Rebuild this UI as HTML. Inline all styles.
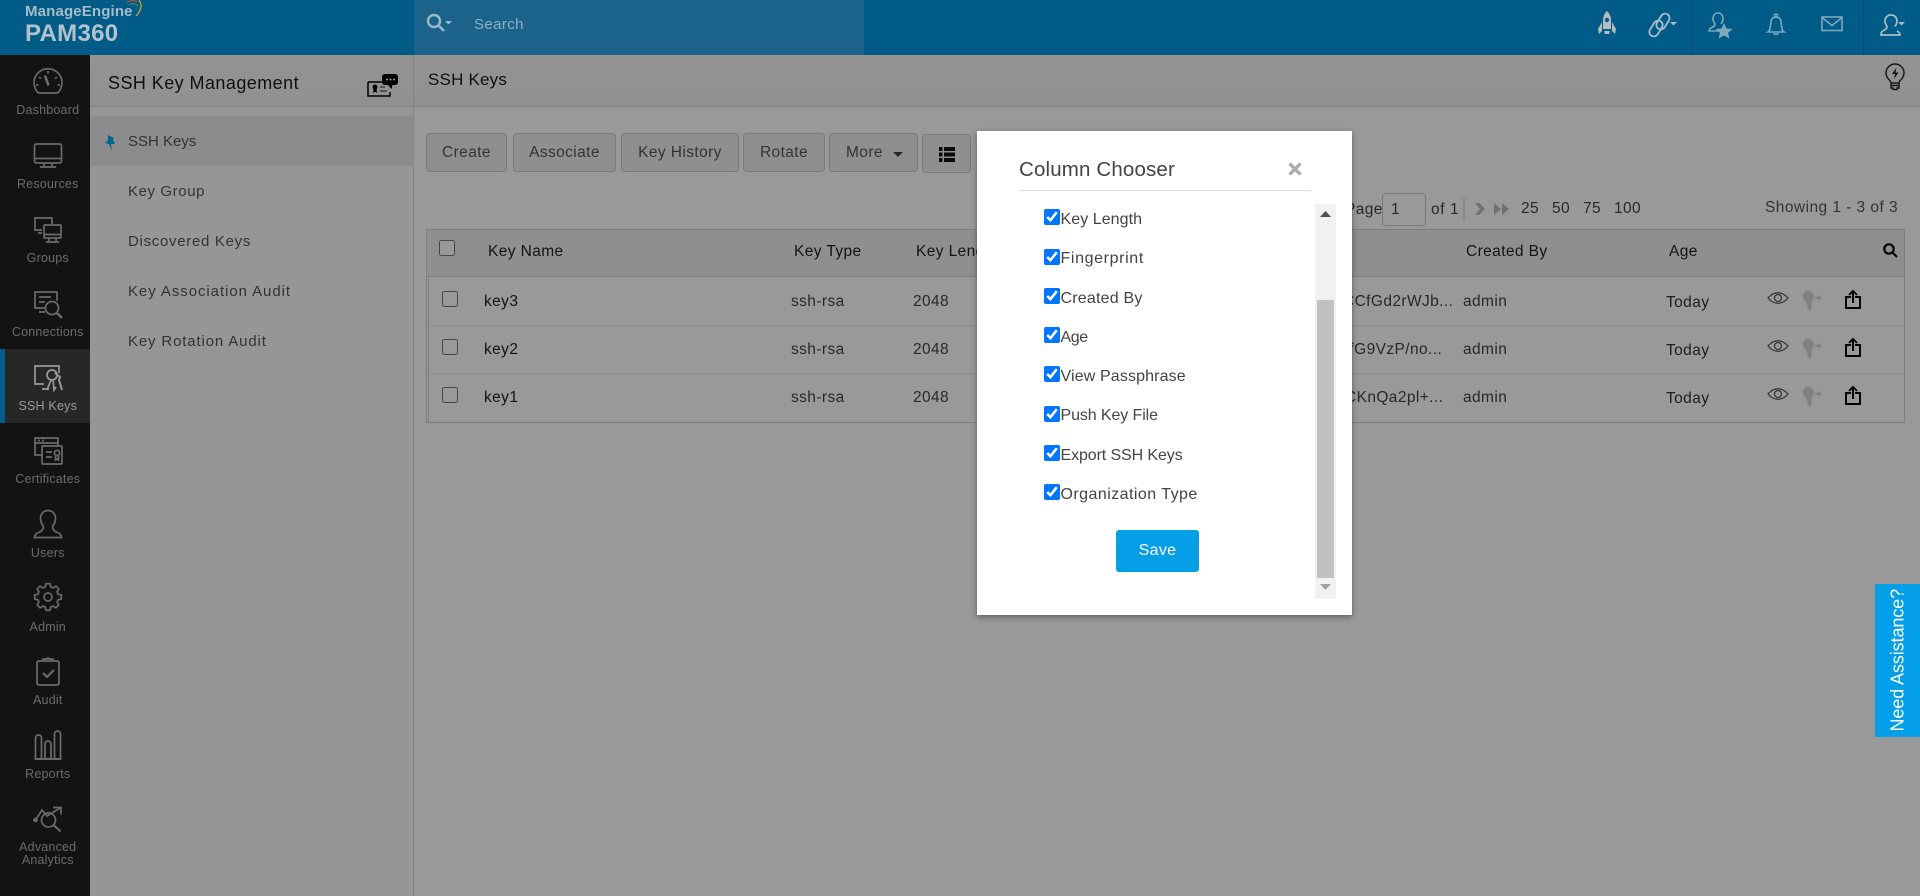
<!DOCTYPE html>
<html lang="en"><head><meta charset="utf-8"><title>SSH Keys - PAM360</title>
<style>
html,body{margin:0;padding:0;width:1920px;height:896px;overflow:hidden;background:#fff;font-family:"Liberation Sans",sans-serif;}
*{box-sizing:border-box}
.b{position:absolute}
.t{position:absolute;white-space:nowrap;line-height:20px;height:20px;font-size:15.5px;letter-spacing:.4px;color:#444}
.n{position:absolute;left:0;width:95.5px;text-align:center;font-size:12.5px;letter-spacing:.2px;line-height:14px;color:#b2b2b2}
svg{position:absolute;overflow:visible}
.i{fill:none;stroke:#b2b2b2;stroke-width:1.7;left:33px;width:30px;height:30px}
button{position:absolute;top:133px;height:39px;background:#eee;border:1px solid #ccc;border-radius:4px;color:#555;font:15.5px "Liberation Sans",sans-serif;letter-spacing:.4px;padding:0;margin:0}
input.c{position:absolute;margin:0;width:16px;height:16px}
.hl{position:absolute;left:428px;width:1476px;height:1px;background:#e4e4e4}
.l{position:absolute;left:128px;color:#555;font-size:15px;white-space:nowrap;line-height:20px}
.m{position:absolute;left:1060.5px;font-size:16px;color:#444;white-space:nowrap;line-height:20px;z-index:12}
</style></head><body>

<!-- top bar -->
<div class="b" style="left:0;top:0;width:1920px;height:55px;background:#0398e2"></div>
<div class="b" style="left:414px;top:0;width:450px;height:55px;background:#2ea5e8"></div>
<div class="b" style="left:1692px;top:0;width:1px;height:55px;background:#0385c8"></div>
<div class="b" style="left:1863px;top:0;width:1px;height:55px;background:#0385c8"></div>

<!-- sidebar -->
<div class="b" style="left:0;top:55px;width:90px;height:841px;background:#202020"></div>
<div class="b" style="left:0;top:349px;width:90px;height:74px;background:#414141"></div>
<div class="b" style="left:0;top:349px;width:5px;height:74px;background:#039eec"></div>

<svg class="i" style="top:67px" viewBox="0 0 30 30"><path d="M5.5 26A14 14 0 1 1 24.5 26Z"/><path d="M12 8.5l3.500 10" stroke-width="2.600"/><path d="M15 4v2.500M6 10l2 1.500M24 10l-2 1.500M3 18h2.500M27 18h-2.500"/></svg>
<div class="n" style="top:103px">Dashboard</div>
<svg class="i" style="top:140px" viewBox="0 0 30 30"><rect x="1.500" y="4" width="27" height="19" rx="2"/><path d="M1.500 18.500h27M11 23v3.500M19 23v3.500M7 27h16"/></svg>
<div class="n" style="top:177px">Resources</div>
<svg class="i" style="top:215px" viewBox="0 0 30 30"><path d="M9 15H2V3h17v6"/><path d="M5 18h4"/><rect x="11" y="10" width="17" height="13" rx="1"/><path d="M11 19.500h17M16 23v3M23 23v3M13 27h13"/></svg>
<div class="n" style="top:251px">Groups</div>
<svg class="i" style="top:289px" viewBox="0 0 30 30"><path d="M12 19H2V3h22v9"/><path d="M6 23h6M6 8h12M6 13h6"/><circle cx="19" cy="19" r="6.500"/><path d="M23.500 23.500L29 29" stroke-width="2.400"/></svg>
<div class="n" style="top:325px">Connections</div>
<svg class="i" style="top:363px;stroke:#fff" viewBox="0 0 30 30"><path d="M26 10V3H2v18h9M9 26h7"/><circle cx="19" cy="12" r="5"/><path d="M18 17l-4 10M20 17l1 10 2-3"/><path d="M22 10l5 4-1 3 3 10" stroke-width="2"/></svg>
<div class="n" style="top:399px;color:#fff">SSH Keys</div>
<svg class="i" style="top:435px" viewBox="0 0 30 30"><path d="M10 20H2V3h23v8"/><path d="M2 8h23M5 5.500h2M9 5.500h2"/><rect x="9" y="11" width="20" height="18" rx="1"/><path d="M13 17h6M13 22h6"/><circle cx="24" cy="18" r="2.600"/><path d="M22.500 21v4l1.500-1 1.500 1v-4"/></svg>
<div class="n" style="top:472px">Certificates</div>
<svg class="i" style="top:509px" viewBox="0 0 30 30"><path d="M15 1.500c-5 0-7.500 4-7.500 8 0 3 1.500 6 3 8 0 2-.5 3.500-3 5-3 1.500-6 2.500-6 6h27c0-3.500-3-4.500-6-6-2.500-1.500-3-3-3-5 1.500-2 3-5 3-8 0-4-2.500-8-7.500-8z"/></svg>
<div class="n" style="top:546px">Users</div>
<svg class="i" style="top:582px" viewBox="0 0 30 30"><path stroke-linejoin="round" d="M12.280 4.860L12.890 1.670H17.110L17.720 4.860L20.250 5.910L22.930 4.080L25.920 7.070L24.090 9.750L25.140 12.280L28.330 12.890V17.110L25.140 17.720L24.090 20.250L25.920 22.930L22.930 25.920L20.250 24.090L17.720 25.140L17.110 28.330H12.890L12.280 25.140L9.750 24.090L7.070 25.920L4.080 22.930L5.910 20.250L4.860 17.720L1.670 17.110V12.890L4.860 12.280L5.910 9.750L4.080 7.070L7.070 4.080L9.750 5.910Z"/><circle cx="15" cy="15" r="4"/></svg>
<div class="n" style="top:620px">Admin</div>
<svg class="i" style="top:657px" viewBox="0 0 30 30"><rect x="4" y="4" width="22" height="24" rx="2"/><path d="M10 4V2h4l1-1 1 1h4v2"/><path d="M10 16l4 4 7-7" stroke-width="2.200"/></svg>
<div class="n" style="top:693px">Audit</div>
<svg class="i" style="top:730px" viewBox="0 0 30 30"><path d="M2.500 29V8a3 3 0 0 1 6 0v21zM12 29V14a2.500 2.500 0 0 1 6 0v15zM21.500 29V4a3 3 0 0 1 6 0v25z"/><path d="M1.500 29h27"/></svg>
<div class="n" style="top:767px">Reports</div>
<svg class="i" style="top:805px" viewBox="0 0 30 30"><path d="M2.500 15L9 5l5 6L28 2.500"/><path d="M20 2.500h8v7"/><circle cx="15.500" cy="15" r="7"/><path d="M20.500 20l7 6.500" stroke-width="2.200"/><circle cx="2.500" cy="15" r="1.500" fill="#b2b2b2"/></svg>
<div class="n" style="top:841px;line-height:12.500px">Advanced<br>Analytics</div>

<!-- sub panel -->
<div class="b" style="left:90px;top:55px;width:324px;height:841px;background:#fbfbfb;border-right:1px solid #ddd"></div>
<div class="b" style="left:90px;top:55px;width:323px;height:52px;background:linear-gradient(#f6f6f6,#f1f1f1);border-bottom:1px solid #ddd"></div>
<div class="b" style="left:90px;top:116px;width:323px;height:50px;background:#e9e9e9"></div>
<div class="t" style="left:108px;top:73px;font-size:18px;letter-spacing:.44px;color:#1a1a1a">SSH Key Management</div>
<svg style="left:366px;top:72px;width:34px;height:26px" viewBox="0 0 34 26"><path d="M2 10v14h22v-4M2 10h14" fill="none" stroke="#000" stroke-width="1.500"/><circle cx="9" cy="15" r="2.500" fill="#000"/><path d="M7.500 16l-.5 5 2-1.200 2 1.200-.5-5z" fill="#000"/><path d="M14 15h5M14 19h7" stroke="#222"/><rect x="16" y="2" width="16" height="11" rx="3" fill="#000"/><path d="M22 13l3.500 4 1-4z" fill="#000"/><path d="M20 7.500h2M23.500 7.500h2M27 7.500h2" stroke="#fff" stroke-width="1.600"/></svg>
<svg style="left:104px;top:134px;width:12px;height:18px" viewBox="0 0 12 18"><path d="M4 1l6 3-1 2 2 4-4 0 1 7-3-7-4-1 3-3z" fill="#03a9f4"/></svg>
<div class="l" style="top:132px;letter-spacing:0">SSH Keys</div>
<div class="l" style="top:182px;letter-spacing:.6px">Key Group</div>
<div class="l" style="top:232px;letter-spacing:.7px">Discovered Keys</div>
<div class="l" style="top:282px;letter-spacing:.93px">Key Association Audit</div>
<div class="l" style="top:332px;letter-spacing:.85px">Key Rotation Audit</div>

<!-- main title -->
<div class="b" style="left:414px;top:55px;width:1506px;height:52px;background:linear-gradient(#f6f6f6,#f1f1f1);border-bottom:1px solid #ddd"></div>
<div class="t" style="left:428px;top:70px;font-size:17px;letter-spacing:.2px;color:#1a1a1a">SSH Keys</div>
<svg style="left:1884px;top:63px;width:22px;height:28px" viewBox="0 0 22 28" fill="none" stroke="#222" stroke-width="1.400"><path d="M7 20c0-3-5-4-5-10a9 9 0 0 1 18 0c0 6-5 7-5 10z"/><path d="M7 20v5h2v1.500h4V25h2v-5M7 22.500h8"/><path d="M12.500 4.500l-4.500 6.500h3l-1 5 4.500-6.500h-3z" fill="#222" stroke="none"/></svg>

<!-- toolbar -->
<button style="left:426px;width:81px">Create</button>
<button style="left:513px;width:103px">Associate</button>
<button style="left:621px;width:118px">Key History</button>
<button style="left:743px;width:82px">Rotate</button>
<button style="left:829px;width:89px;text-align:left;padding-left:16px">More<span style="position:absolute;left:63px;top:18px;border:5px solid transparent;border-top-color:#444;border-bottom:0"></span></button>
<button style="left:922px;width:49px;top:134px"><svg style="left:16px;top:12px;width:16px;height:15px" viewBox="0 0 16 15" fill="#111"><path d="M0 0h3.500v4H0zM5 0h11v4H5zM0 5.500h3.500v4H0zM5 5.500h11v4H5zM0 11h3.500v4H0zM5 11h11v4H5z"/></svg></button>

<!-- paging -->
<div class="t" style="left:1345px;top:200px">Page</div>
<div class="b" style="left:1382px;top:193px;width:44px;height:33px;border:1px solid #ccc;border-radius:4px;background:#fff"></div>
<div class="t" style="left:1391px;top:200px">1</div>
<div class="t" style="left:1431px;top:200px;letter-spacing:.6px">of 1</div>
<div class="b" style="left:1463px;top:197px;width:2px;height:24px;background:#e6e6e6"></div>
<svg style="left:1475px;top:202px;width:34px;height:14px" viewBox="0 0 34 14" fill="#bbb"><path d="M0 1h4l6 6-6 6H0l5-6zM19 1l7 6-7 6zM27 1l7 6-7 6z"/></svg>
<div class="t" style="left:1521px;top:199px">25</div>
<div class="t" style="left:1552px;top:199px">50</div>
<div class="t" style="left:1583px;top:199px">75</div>
<div class="t" style="left:1614px;top:199px">100</div>
<div class="t" style="left:1765px;top:198px;letter-spacing:.45px;color:#555">Showing 1 - 3 of 3</div>

<!-- table -->
<div class="b" style="left:426px;top:229px;width:1479px;height:194px;border:1px solid #d4d4d4;background:#fff"></div>
<div class="b" style="left:427px;top:230px;width:1477px;height:47px;background:#eee;border-bottom:1px solid #d4d4d4"></div>
<div class="hl" style="top:325px"></div><div class="hl" style="top:373px"></div>
<div class="b" style="left:428px;top:277px;width:1px;height:145px;background:#d4d4d4"></div>
<input class="c" type="checkbox" style="left:439px;top:240px">
<input class="c" type="checkbox" style="left:442px;top:291px">
<input class="c" type="checkbox" style="left:442px;top:339px">
<input class="c" type="checkbox" style="left:442px;top:387px">
<div class="t" style="left:488px;top:242px;color:#222">Key Name</div>
<div class="t" style="left:794px;top:242px;color:#222">Key Type</div>
<div class="t" style="left:916px;top:242px;color:#222">Key Length</div>
<div class="t" style="left:1466px;top:242px;color:#222">Created By</div>
<div class="t" style="left:1669px;top:242px;color:#222">Age</div>
<svg style="left:1883px;top:243px;width:15px;height:15px" viewBox="0 0 15 15" fill="none" stroke="#000" stroke-width="2.200"><circle cx="6" cy="6" r="4.700"/><path d="M9.500 9.500L14 14"/></svg>

<div class="t" style="left:484px;top:292px;color:#222">key3</div><div class="t" style="left:791px;top:292px">ssh-rsa</div><div class="t" style="left:913px;top:292px">2048</div>
<div class="t" style="left:484px;top:340px;color:#222">key2</div><div class="t" style="left:791px;top:340px">ssh-rsa</div><div class="t" style="left:913px;top:340px">2048</div>
<div class="t" style="left:484px;top:388px;color:#222">key1</div><div class="t" style="left:791px;top:388px">ssh-rsa</div><div class="t" style="left:913px;top:388px">2048</div>

<div class="t" style="left:1343px;top:292px">CCfGd2rWJb...</div><div class="t" style="left:1463px;top:292px">admin</div><div class="t" style="left:1666px;top:293px;color:#333">Today</div>
<div class="t" style="left:1345px;top:340px">ffG9VzP/no...</div><div class="t" style="left:1463px;top:340px">admin</div><div class="t" style="left:1666px;top:341px;color:#333">Today</div>
<div class="t" style="left:1345px;top:388px">CKnQa2pl+...</div><div class="t" style="left:1463px;top:388px">admin</div><div class="t" style="left:1666px;top:389px;color:#333">Today</div>

<svg style="left:1768px;top:291px;width:100px;height:20px" viewBox="0 0 100 20"><g fill="none" stroke="#555" stroke-width="1.200"><path d="M0 7c6-7 14-7 20 0-6 7-14 7-20 0z"/><circle cx="10" cy="7" r="3.500"/></g><g fill="#d6d6d6"><path d="M40 0a6 6 0 0 1 6 6c0 2-1 3-2 4l-1 9-2 1-3-10c-2-1-3-2-3-4a5 5 0 0 1 5-6z"/><path d="M47 6h3V3.500l4 3.500-4 3.500V8h-3z"/></g><g fill="none" stroke="#000" stroke-width="1.900"><path d="M83 6h-5v11h14V6h-5M85 12V0M81 4l4-4 4 4"/></g></svg>
<svg style="left:1768px;top:339px;width:100px;height:20px" viewBox="0 0 100 20"><g fill="none" stroke="#555" stroke-width="1.200"><path d="M0 7c6-7 14-7 20 0-6 7-14 7-20 0z"/><circle cx="10" cy="7" r="3.500"/></g><g fill="#d6d6d6"><path d="M40 0a6 6 0 0 1 6 6c0 2-1 3-2 4l-1 9-2 1-3-10c-2-1-3-2-3-4a5 5 0 0 1 5-6z"/><path d="M47 6h3V3.500l4 3.500-4 3.500V8h-3z"/></g><g fill="none" stroke="#000" stroke-width="1.900"><path d="M83 6h-5v11h14V6h-5M85 12V0M81 4l4-4 4 4"/></g></svg>
<svg style="left:1768px;top:387px;width:100px;height:20px" viewBox="0 0 100 20"><g fill="none" stroke="#555" stroke-width="1.200"><path d="M0 7c6-7 14-7 20 0-6 7-14 7-20 0z"/><circle cx="10" cy="7" r="3.500"/></g><g fill="#d6d6d6"><path d="M40 0a6 6 0 0 1 6 6c0 2-1 3-2 4l-1 9-2 1-3-10c-2-1-3-2-3-4a5 5 0 0 1 5-6z"/><path d="M47 6h3V3.500l4 3.500-4 3.500V8h-3z"/></g><g fill="none" stroke="#000" stroke-width="1.900"><path d="M83 6h-5v11h14V6h-5M85 12V0M81 4l4-4 4 4"/></g></svg>

<!-- dim overlay -->
<div class="b" style="left:0;top:0;width:1920px;height:896px;background:rgba(0,0,0,.4);z-index:5"></div>

<!-- header content -->
<div class="t" style="left:25px;top:2px;font-size:15px;font-weight:bold;letter-spacing:.15px;color:#a6bcc9;z-index:6">ManageEngine</div>
<svg style="left:126px;top:0;width:20px;height:18px;z-index:6" viewBox="0 0 20 18" fill="none" stroke-width="1.300"><path d="M1 3C4 0 9 0 11 2" stroke="#a85050"/><path d="M3 5c3-2 6-2 9 1" stroke="#3c8a5a"/><path d="M13 0c3 4 3 10-3 16" stroke="#c9a32e"/></svg>
<div class="t" style="left:25px;top:24px;font-size:24px;font-weight:bold;letter-spacing:.3px;color:#b2c2cc;z-index:6">PAM360</div>
<svg style="left:426px;top:13px;width:27px;height:20px;z-index:6" viewBox="0 0 27 20" fill="none" stroke="#9cb7c6" stroke-width="2.400"><circle cx="8" cy="8" r="6"/><path d="M12.500 12.500L18 18"/><path d="M19 8h7l-3.500 3.500z" fill="#9cb7c6" stroke="none"/></svg>
<div class="t" style="left:474px;top:15px;font-size:15px;letter-spacing:.4px;color:#8eb0c3;z-index:6">Search</div>
<svg style="left:1597px;top:10px;width:20px;height:26px;z-index:6" viewBox="0 0 20 26"><path d="M10 1c3 3 4 6 4 10v8H6v-8c0-4 1-7 4-10z" fill="#b6bbbe"/><path d="M5 12l-4 7 1 5 3-3zM15 12l4 7-1 5-3-3z" fill="#b6bbbe"/><path d="M7 21h6l-1 3H8z" fill="#b6bbbe"/><circle cx="10" cy="10" r="2.200" fill="#025f8e"/></svg>
<svg style="left:1649px;top:13px;width:32px;height:26px;z-index:6" viewBox="0 0 32 26" fill="none" stroke="#a9bcc8" stroke-width="1.800"><rect x="9.500" y="0" width="9" height="17" rx="4.500" transform="rotate(32 14 8.500)"/><rect x="2.500" y="7" width="9" height="17" rx="4.500" transform="rotate(32 7 15.500)"/><path d="M21 9h7l-3.500 3.500z" fill="#a9bcc8" stroke="none"/></svg>
<svg style="left:1708px;top:12px;width:26px;height:26px;z-index:6" viewBox="0 0 26 26"><path d="M10 1c-3.500 0-5 3-5 5.500 0 2 1 4 2 5.500 0 1.500-.5 2-2 3-2 1-4 1.500-4 4h12" fill="none" stroke="#7fa8bf" stroke-width="1.600"/><path d="M10 1c3.500 0 5 3 5 5.500 0 2-1 4-2 5.500" fill="none" stroke="#7fa8bf" stroke-width="1.600"/><path d="M16 11l2.500 5.500 6 .5-4.500 4 1.500 5.500-5.500-3-5.500 3 1.500-5.500-4.500-4 6-.5z" fill="#7fa8bf"/></svg>
<svg style="left:1767px;top:12px;width:18px;height:24px;z-index:6" viewBox="0 0 18 24" fill="none" stroke="#7fa8bf" stroke-width="1.600"><path d="M1 20c3-2 2-6 3-10a5 5 0 0 1 10 0c1 4 0 8 3 10z"/><circle cx="9" cy="3.500" r="1.500"/><path d="M7 21c0 2 4 2 4 0"/></svg>
<svg style="left:1821px;top:16px;width:22px;height:16px;z-index:6" viewBox="0 0 22 16" fill="none" stroke="#7fa8bf" stroke-width="1.600"><rect x="1" y="1" width="20" height="13.500"/><path d="M1 1.500l10 8 10-8"/></svg>
<svg style="left:1880px;top:14px;width:26px;height:22px;z-index:6" viewBox="0 0 26 22" fill="none" stroke="#a9bcc8" stroke-width="1.700"><path d="M11 1c-4 0-6 3-6 6 0 2 1 4 2 5.500 0 1.500-.5 2.500-2.500 3.500C2 17 1 18 1 21h19c0-2-1-3-3-4"/><path d="M11 1c4 0 6 3 6 6 0 2-1 4-2 5.500"/><path d="M18 8h7l-3.500 3.500z" fill="#a9bcc8" stroke="none"/></svg>

<!-- modal -->
<div class="b" style="left:977px;top:131px;width:375px;height:484px;background:#fff;box-shadow:0 2px 6px rgba(0,0,0,.4);z-index:10"></div>
<div class="t" style="left:1019px;top:160px;font-size:20.500px;letter-spacing:.15px;color:#444;z-index:12">Column Chooser</div>
<svg style="left:1288px;top:162px;width:14px;height:14px;z-index:12" viewBox="0 0 14 14" stroke="#aaa" stroke-width="3.200"><path d="M1.500 1.500l11 11M12.500 1.500l-11 11"/></svg>
<div class="b" style="left:1019px;top:190px;width:292px;height:1px;background:#ddd;z-index:12"></div>
<input class="c" type="checkbox" checked style="left:1044px;top:209px;z-index:12"><div class="m" style="top:210px;letter-spacing:.06px">Key Length</div>
<input class="c" type="checkbox" checked style="left:1044px;top:249px;z-index:12"><div class="m" style="top:249px;letter-spacing:.63px">Fingerprint</div>
<input class="c" type="checkbox" checked style="left:1044px;top:288px;z-index:12"><div class="m" style="top:289px;letter-spacing:.2px">Created By</div>
<input class="c" type="checkbox" checked style="left:1044px;top:327px;z-index:12"><div class="m" style="top:328px;letter-spacing:-.4px">Age</div>
<input class="c" type="checkbox" checked style="left:1044px;top:366px;z-index:12"><div class="m" style="top:367px;letter-spacing:.13px">View Passphrase</div>
<input class="c" type="checkbox" checked style="left:1044px;top:406px;z-index:12"><div class="m" style="top:406px;letter-spacing:-.1px">Push Key File</div>
<input class="c" type="checkbox" checked style="left:1044px;top:445px;z-index:12"><div class="m" style="top:446px;letter-spacing:-.1px">Export SSH Keys</div>
<input class="c" type="checkbox" checked style="left:1044px;top:484px;z-index:12"><div class="m" style="top:485px;letter-spacing:.45px">Organization Type</div>
<div class="b" style="left:1116px;top:530px;width:83px;height:42px;background:#049fe6;border-radius:3px;color:#fff;font-size:16px;letter-spacing:.3px;text-align:center;line-height:42px;z-index:12">Save</div>
<!-- modal scrollbar -->
<div class="b" style="left:1315px;top:204px;width:21px;height:395px;background:#f1f1f1;z-index:12"></div>
<div class="b" style="left:1317px;top:300px;width:17px;height:278px;background:#c1c1c1;z-index:13"></div>
<svg style="left:1320px;top:211px;width:11px;height:7px;z-index:13" viewBox="0 0 11 7"><path d="M5.500 0L11 6H0z" fill="#505050"/></svg>
<svg style="left:1320px;top:584px;width:11px;height:7px;z-index:13" viewBox="0 0 11 7"><path d="M0 0h11L5.500 6z" fill="#a3a3a3"/></svg>

<!-- need assistance -->
<div class="b" style="left:1875px;top:584px;width:45px;height:153px;background:#049fe6;z-index:12"></div>
<div class="t" style="left:1826.500px;top:650.500px;width:141px;height:20px;font-size:18px;letter-spacing:-.1px;color:#fff;transform:rotate(-90deg);text-align:center;z-index:13">Need Assistance?</div>

</body></html>
